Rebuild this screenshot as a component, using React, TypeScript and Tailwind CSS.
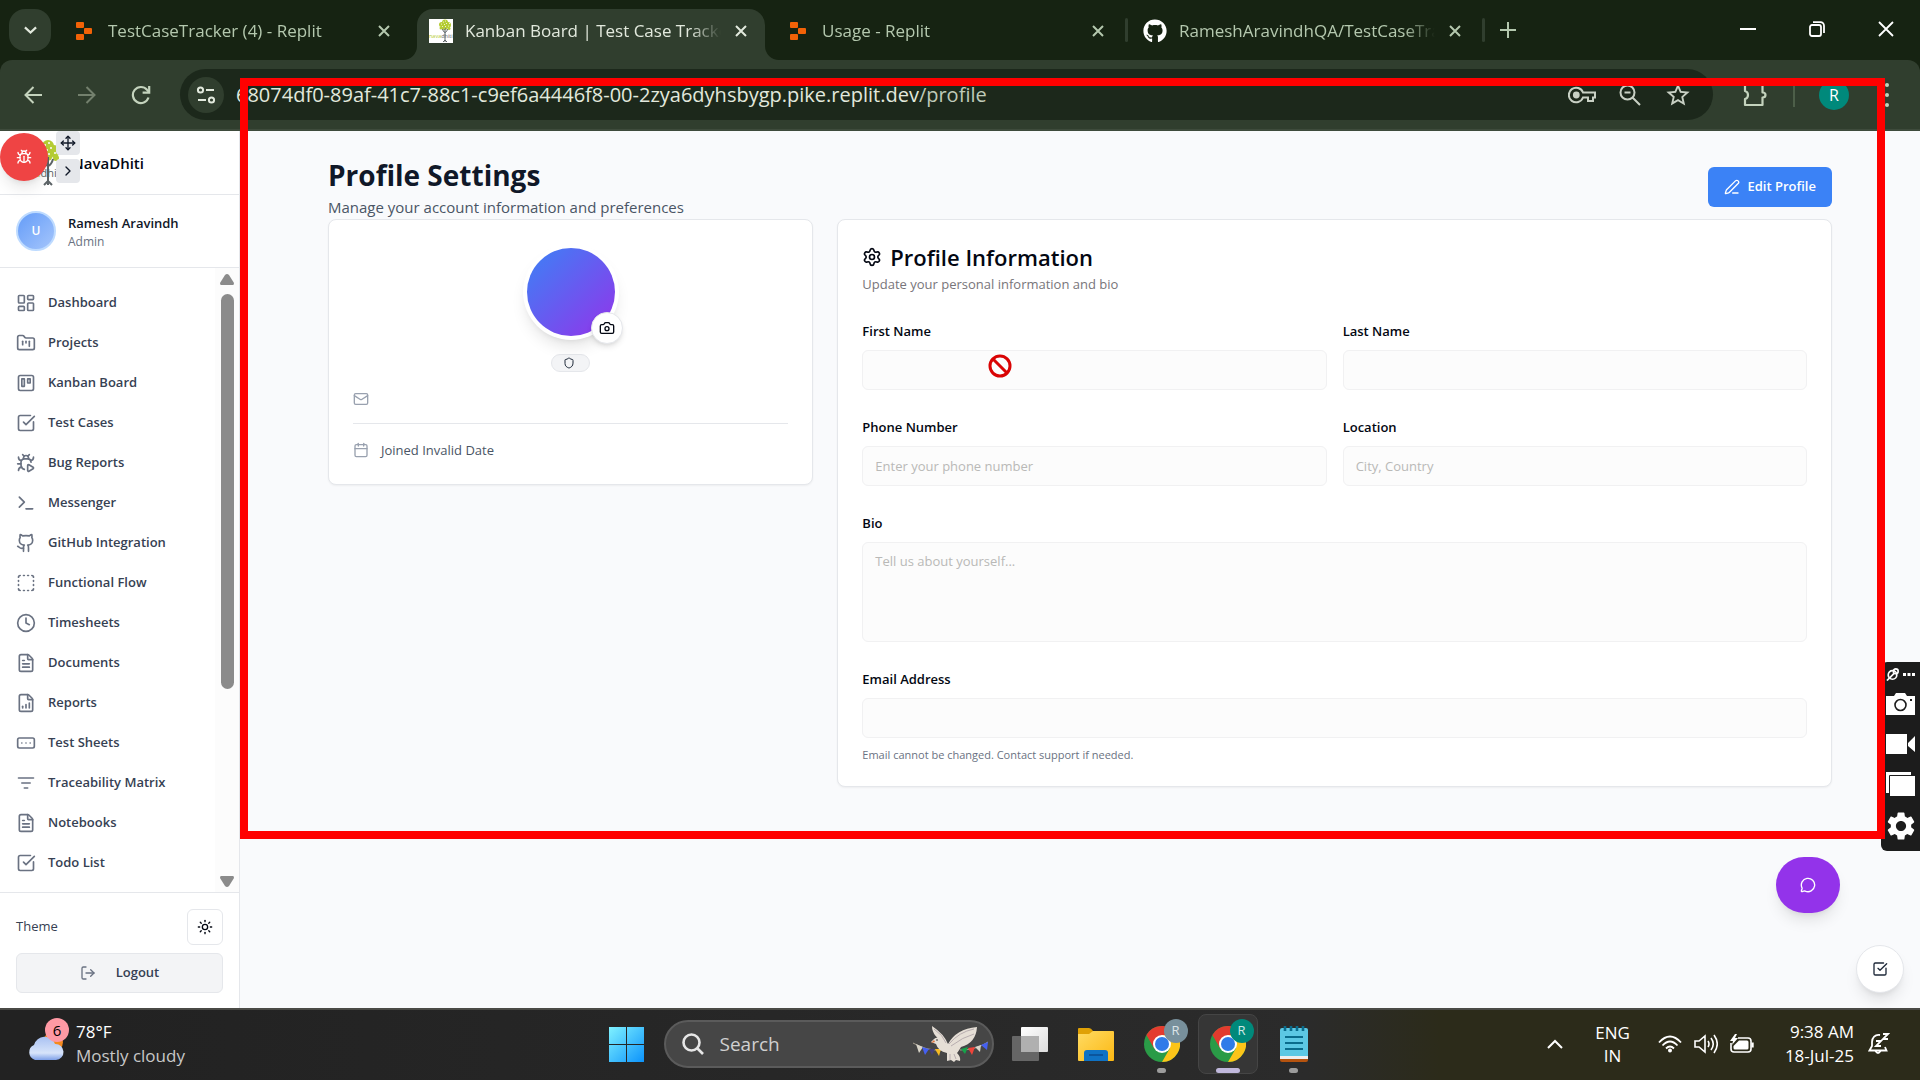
import type { ComponentType, ReactNode } from "react";
import {
  Bug,
  BugPlay,
  Calendar,
  Camera,
  ChevronRight,
  Clock,
  FileChartColumnIncreasing,
  FileText,
  FolderKanban,
  Github,
  LayoutDashboard,
  LogOut,
  Mail,
  MessageCircle,
  Move,
  PenLine,
  RectangleEllipsis,
  Settings,
  Shield,
  SquareCheckBig,
  SquareDashed,
  Sun,
  Terminal,
  Trello,
} from "lucide-react";
import { FaGithub } from "react-icons/fa";
import { MdSettings, MdStarBorder } from "react-icons/md";

type IconType = ComponentType<{ className?: string; strokeWidth?: number }>;

/* ---------- Browser window ---------- */

function ReplitIcon() {
  return (
    <svg viewBox="0 0 24 24" className="size-6" fill="#f26207">
      <rect x="4" y="3" width="8" height="6" rx="1" />
      <rect x="12" y="9" width="8" height="6" rx="1" />
      <rect x="4" y="15" width="8" height="6" rx="1" />
    </svg>
  );
}

function TreeLogo({ className }: { className?: string }) {
  return (
    <svg viewBox="0 0 48 48" className={className}>
      <g fill="#b5cc34">
        <circle cx="32" cy="7" r="6" />
        <circle cx="25" cy="11" r="5" />
        <circle cx="38" cy="12" r="6" />
        <circle cx="31" cy="16" r="6" />
        <circle cx="24" cy="18" r="3" />
        <circle cx="40" cy="19" r="3" />
      </g>
      <g fill="#ffffff">
        <circle cx="29" cy="6" r="1" />
        <circle cx="33" cy="4" r="1" />
        <circle cx="35" cy="9" r="1" />
        <circle cx="31" cy="11" r="1" />
        <circle cx="25" cy="10" r="1" />
        <circle cx="27" cy="15" r="1" />
        <circle cx="33" cy="15" r="1" />
        <circle cx="39" cy="14" r="1" />
        <circle cx="41" cy="9" r="1" />
        <circle cx="31" cy="19" r="1" />
      </g>
      <path
        d="M32 18v28M32 27c-3-1-4-4-5-7M32 27c3-1 4-3 5-7M32 42l-4 4M32 42l4 4"
        stroke="#5d6467"
        strokeWidth="2"
        fill="none"
      />
      <text x="0" y="38" fontSize="11" fontFamily="Open Sans, sans-serif" fill="#b5cc34">
        nava<tspan fill="#5d6467">dhiti</tspan>
      </text>
    </svg>
  );
}

function CloseIcon({ className }: { className?: string }) {
  return (
    <svg viewBox="0 0 12 12" className={className} stroke="currentColor" strokeWidth="2" fill="none">
      <path d="M1 1l10 10M11 1L1 11" />
    </svg>
  );
}

function Tab({ icon, title, active, divider }: { icon: ReactNode; title: string; active?: boolean; divider?: boolean }) {
  return (
    <div
      className={
        active
          ? "relative flex h-[51px] w-[348px] items-center rounded-t-2xl bg-[#303e2e] pr-3 pb-[7px] pl-3 text-[#e2e9dd]"
          : "relative flex h-[51px] w-[348px] items-center pr-3 pb-[7px] pl-3 text-[#b4c8ae]"
      }
    >
      {active && (
        <>
          <svg viewBox="0 0 14 14" className="absolute bottom-0 -left-[14px] size-[14px]" fill="#303e2e">
            <path d="M14 0v14H0A14 14 0 0 0 14 0z" />
          </svg>
          <svg viewBox="0 0 14 14" className="absolute -right-[14px] bottom-0 size-[14px]" fill="#303e2e">
            <path d="M0 0v14h14A14 14 0 0 1 0 0z" />
          </svg>
        </>
      )}
      <span className="flex size-6 shrink-0 items-center justify-center">{icon}</span>
      <span className="ml-3 min-w-0 flex-1 overflow-hidden text-[17px] leading-6 whitespace-nowrap [mask-image:linear-gradient(to_right,black_88%,transparent)]">
        {title}
      </span>
      <button aria-label={"Close " + title} className="ml-2 flex size-6 shrink-0 items-center justify-center">
        <CloseIcon className="size-3" />
      </button>
      {divider && <span className="absolute top-[9px] -right-[6px] h-6 w-[3px] rounded bg-[#303e2e]" />}
    </div>
  );
}

function TabStrip() {
  return (
    <div className="flex h-[60px] shrink-0 items-start bg-[#162312] pt-[9px] text-[#b4c8ae]">
      <button
        aria-label="Search tabs"
        className="mr-[9px] ml-[9px] flex size-[42px] shrink-0 items-center justify-center rounded-2xl bg-[#303e2e]"
      >
        <svg viewBox="0 0 14 9" className="w-[13px]" fill="none" stroke="#e2e9dd" strokeWidth="2.4">
          <path d="M1 1.5l6 5.5 6-5.5" />
        </svg>
      </button>
      <div className="flex min-w-0 gap-[9px]">
        <Tab icon={<ReplitIcon />} title="TestCaseTracker (4) - Replit" />
        <Tab
          active
          icon={
            <span className="size-6 bg-white">
              <TreeLogo className="size-6" />
            </span>
          }
          title="Kanban Board | Test Case Tracker"
        />
        <Tab icon={<ReplitIcon />} title="Usage - Replit" divider />
        <Tab icon={<FaGithub className="size-6 text-white" />} title="RameshAravindhQA/TestCaseTracker" divider />
      </div>
      <button aria-label="New tab" className="ml-2 flex size-[42px] items-center justify-center">
        <svg viewBox="0 0 16 16" className="size-4" stroke="currentColor" strokeWidth="2">
          <path d="M8 0v16M0 8h16" />
        </svg>
      </button>
      <div className="ml-auto flex pt-1 text-white">
        <button aria-label="Minimize" className="flex h-10 w-[69px] items-start justify-center pt-[15px]">
          <span className="h-[2px] w-4 bg-white" />
        </button>
        <button aria-label="Restore" className="flex h-10 w-[69px] items-start justify-center pt-2">
          <svg viewBox="0 0 16 16" className="size-4" fill="none" stroke="currentColor" strokeWidth="1.8">
            <rect x="1" y="4" width="11" height="11" rx="2" />
            <path d="M4 1.2h7.500a3.500 3.500 0 0 1 3.500 3.500V12" />
          </svg>
        </button>
        <button aria-label="Close window" className="flex h-10 w-[69px] items-start justify-center pt-2">
          <svg viewBox="0 0 16 16" className="size-4" stroke="currentColor" strokeWidth="1.8">
            <path d="M1 1l14 14M15 1L1 15" />
          </svg>
        </button>
      </div>
    </div>
  );
}

function Toolbar() {
  return (
    <div className="shrink-0 bg-[#162312]">
      <div className="flex h-[71px] items-center rounded-t-xl border-b-2 border-[#3e4b3c] bg-[#303e2e] text-[#c4d3bd]">
        <div className="flex w-[180px] shrink-0 items-center pl-[21px]">
          <button aria-label="Back" className="flex size-6 items-center justify-center">
            <svg viewBox="0 0 18 18" className="size-[18px]" fill="none" stroke="currentColor" strokeWidth="2">
              <path d="M18 9H2M9.500 1L1.500 9l8 8" />
            </svg>
          </button>
          <button aria-label="Forward" className="ml-[30px] flex size-6 items-center justify-center text-[#73806d]">
            <svg viewBox="0 0 18 18" className="size-[18px]" fill="none" stroke="currentColor" strokeWidth="2">
              <path d="M0 9h16M8.500 1l8 8-8 8" />
            </svg>
          </button>
          <button aria-label="Reload" className="ml-[30px] flex size-6 items-center justify-center">
            <svg viewBox="0 0 20 20" className="size-5" fill="none" stroke="currentColor" strokeWidth="2.2">
              <path d="M17.500 12.500A8 8 0 1 1 16 4.800L18 7" />
              <path d="M18.200 1v6.600h-6.600" />
            </svg>
          </button>
        </div>
        <div className="flex h-[51px] min-w-0 flex-1 items-center rounded-full bg-[#1c281b] pr-5 pl-2">
          <button
            aria-label="View site information"
            className="flex size-9 shrink-0 items-center justify-center rounded-full bg-[#303e2e]"
          >
            <svg viewBox="0 0 20 20" className="size-5" fill="none" stroke="#e2e9dd" strokeWidth="2">
              <circle cx="4.500" cy="5" r="2.600" />
              <path d="M10 5h8M2 15h8" />
              <circle cx="15.500" cy="15" r="2.600" />
            </svg>
          </button>
          <span className="ml-3 min-w-0 flex-1 truncate text-[20px] leading-7 text-[#e2e9dd]">
            68074df0-89af-41c7-88c1-c9ef6a4446f8-00-2zya6dyhsbygp.pike.replit.dev
            <span className="text-[#bfcab8]">/profile</span>
          </span>
          <div className="flex items-center gap-[18px] text-[#c8d0c4]">
            <button aria-label="Passwords" className="flex w-[30px] justify-center">
              <svg viewBox="0 0 28 18" className="w-7" fill="none" stroke="currentColor" strokeWidth="2">
                <path d="M15 6.500a7.300 7.300 0 1 0 0 5h5V15h5v-3.500h2v-5z" />
                <circle cx="8.300" cy="9" r="2.400" fill="currentColor" />
              </svg>
            </button>
            <button aria-label="Zoom" className="flex w-[30px] justify-center">
              <svg viewBox="0 0 22 22" className="size-[22px]" fill="none" stroke="currentColor" strokeWidth="2">
                <circle cx="8.500" cy="8.500" r="7" />
                <path d="M13.500 13.500l7.500 7.500M5.500 8.500h6" />
              </svg>
            </button>
            <button aria-label="Bookmark this tab" className="flex w-[30px] justify-center">
              <MdStarBorder className="size-7" />
            </button>
          </div>
        </div>
        <div className="flex w-[207px] shrink-0 items-center pl-7">
          <button aria-label="Extensions" className="flex w-7 justify-center">
            <svg viewBox="0 0 26 24" className="w-[26px]" fill="none" stroke="currentColor" strokeWidth="2.2" strokeLinejoin="round">
              <path d="M3 2h17.500v7.500c4 0 4 5 0 5V22H3v-6c4-1 4-7 0-8z" />
            </svg>
          </button>
          <span className="ml-6 h-6 w-[2px] bg-[#4d5f49]" />
          <button
            aria-label="Profile R"
            className="ml-6 flex size-[30px] items-center justify-center rounded-full bg-[#00897b] text-[16px] text-white"
          >
            R
          </button>
          <button aria-label="Menu" className="ml-[30px] flex w-4 flex-col items-center gap-[6px]">
            <span className="size-1 rounded-full bg-[#c4d3bd]" />
            <span className="size-1 rounded-full bg-[#c4d3bd]" />
            <span className="size-1 rounded-full bg-[#c4d3bd]" />
          </button>
        </div>
      </div>
    </div>
  );
}

/* ---------- Sidebar ---------- */

function FilterLines({ className }: { className?: string }) {
  return (
    <svg viewBox="0 0 24 24" className={className} stroke="currentColor" strokeWidth="2" strokeLinecap="round">
      <path d="M3 6h18M7 12h10M10 18h4" />
    </svg>
  );
}

const navItems: { label: string; icon: IconType }[] = [
  { label: "Dashboard", icon: LayoutDashboard },
  { label: "Projects", icon: FolderKanban },
  { label: "Kanban Board", icon: Trello },
  { label: "Test Cases", icon: SquareCheckBig },
  { label: "Bug Reports", icon: BugPlay },
  { label: "Messenger", icon: Terminal },
  { label: "GitHub Integration", icon: Github },
  { label: "Functional Flow", icon: SquareDashed },
  { label: "Timesheets", icon: Clock },
  { label: "Documents", icon: FileText },
  { label: "Reports", icon: FileChartColumnIncreasing },
  { label: "Test Sheets", icon: RectangleEllipsis },
  { label: "Traceability Matrix", icon: FilterLines },
  { label: "Notebooks", icon: FileText },
  { label: "Todo List", icon: SquareCheckBig },
];

function Sidebar() {
  return (
    <aside className="flex w-60 shrink-0 flex-col border-r border-gray-200 bg-white">
      <div className="relative flex h-16 shrink-0 items-center border-b border-gray-200 pl-4">
        <TreeLogo className="size-12" />
        <span className="ml-2 text-[15px] leading-6 font-semibold text-gray-950">NavaDhiti</span>
        <button
          aria-label="Report a bug"
          className="absolute top-[2px] left-0 flex size-12 items-center justify-center rounded-full bg-[#ef4444] text-white shadow-lg"
        >
          <Bug className="size-4" />
        </button>
        <button
          aria-label="Move"
          className="absolute top-0 left-14 flex size-6 items-center justify-center rounded bg-gray-200 text-gray-900"
        >
          <Move className="size-4" />
        </button>
        <button
          aria-label="Collapse"
          className="absolute top-7 left-14 flex size-6 items-center justify-center rounded bg-gray-200 text-gray-900"
        >
          <ChevronRight className="size-4" />
        </button>
      </div>
      <div className="flex h-[73px] shrink-0 items-center gap-3 border-b border-gray-200 px-4">
        <span className="flex size-10 items-center justify-center rounded-full border-2 border-blue-200 bg-linear-to-br from-[#649cf8] to-[#a5c5fb] text-xs font-semibold text-white">
          U
        </span>
        <div className="pt-[2px]">
          <p className="text-[13px] leading-5 font-semibold text-gray-900">Ramesh Aravindh</p>
          <p className="text-xs leading-[18px] text-gray-500">Admin</p>
        </div>
      </div>
      <div className="flex min-h-0 flex-1">
        <nav className="min-w-0 flex-1 overflow-hidden pt-[15px]">
          {navItems.map(({ label, icon: Icon }) => (
            <a
              key={label}
              href="#"
              className="flex h-10 items-center gap-3 px-4 text-[13px] font-semibold text-gray-700"
            >
              <Icon className="size-5 shrink-0 text-gray-500" strokeWidth={2} />
              {label}
            </a>
          ))}
        </nav>
        <div className="flex w-6 flex-col items-center bg-[#fcfcfc] pt-[6px] pb-[5px]">
          <svg viewBox="0 0 14 11" className="w-[14px]" fill="#8b8b8b">
            <path d="M7 0q1 0 2 1l5 8q0 2-1 2H1q-1 0-1-2l5-8q1-1 2-1z" />
          </svg>
          <div className="flex min-h-0 w-[13px] flex-1 flex-col py-[9px]">
            <div className="h-[69%] rounded-full bg-[#8b8b8b]" />
          </div>
          <svg viewBox="0 0 14 11" className="w-[14px] rotate-180" fill="#8b8b8b">
            <path d="M7 0q1 0 2 1l5 8q0 2-1 2H1q-1 0-1-2l5-8q1-1 2-1z" />
          </svg>
        </div>
      </div>
      <div className="shrink-0 border-t border-gray-200 px-4 pt-4 pb-[15px]">
        <div className="flex items-center justify-between">
          <span className="text-[13px] text-gray-700">Theme</span>
          <button
            aria-label="Toggle theme"
            className="flex size-9 items-center justify-center rounded-md border border-gray-200 bg-white text-gray-950"
          >
            <Sun className="size-4" />
          </button>
        </div>
        <button className="mt-2 flex h-10 w-full items-center justify-center gap-5 rounded-md border border-gray-200 bg-gray-100 text-[13px] font-semibold text-gray-700">
          <LogOut className="size-4 text-gray-500" />
          Logout
        </button>
      </div>
    </aside>
  );
}

/* ---------- Profile page ---------- */

function Field({ id, label, placeholder, children }: { id: string; label: string; placeholder?: string; children?: ReactNode }) {
  return (
    <div>
      <label htmlFor={id} className="block text-[13px] leading-6 font-semibold text-gray-950">
        {label}
      </label>
      <input
        id={id}
        disabled
        placeholder={placeholder}
        className="mt-[7px] block h-10 w-full rounded-md border border-[#f1f1f2] bg-[#fcfcfc] px-3 text-[13px] placeholder:text-[#b9b9b7]"
      />
      {children}
    </div>
  );
}

function ProfileCard() {
  return (
    <section className="flex flex-col items-center rounded-lg border border-gray-200 bg-white p-6 shadow-xs">
      <div className="relative size-24 rounded-full bg-white p-1 shadow-lg">
        <div className="size-full rounded-full bg-[linear-gradient(to_bottom_right,#3b82f6,#9333ea)]" />
        <button
          aria-label="Change photo"
          className="absolute -right-1 -bottom-1 flex size-8 items-center justify-center rounded-full border border-gray-200 bg-white text-gray-950 shadow-md"
        >
          <Camera className="size-4" />
        </button>
      </div>
      <span className="mt-[14px] flex h-[18px] items-center rounded-full border border-gray-200 bg-gray-100 pr-[14px] pl-[11px] text-gray-800">
        <Shield className="size-3" />
      </span>
      <div className="flex w-full flex-col pt-[19px]">
        <Mail className="size-4 text-gray-400" />
        <hr className="mt-4 border-gray-200" />
        <div className="mt-4 flex items-center gap-3 text-[13px] leading-5 text-gray-600">
          <Calendar className="size-4 text-gray-400" />
          Joined Invalid Date
        </div>
      </div>
    </section>
  );
}

function NotAllowedCursor() {
  return (
    <svg
      viewBox="0 0 24 24"
      className="absolute top-[134px] left-[150px] size-6"
      fill="none"
      stroke="#d90404"
      strokeWidth="3"
    >
      <circle cx="12" cy="12" r="10" />
      <path d="M5 5l14 14" />
    </svg>
  );
}

function InformationCard() {
  return (
    <section className="relative col-span-2 rounded-lg border border-gray-200 bg-white px-6 pt-[21px] pb-[22px] shadow-xs">
      <h2 className="flex items-center gap-2 text-[22px] leading-8 font-semibold text-gray-950">
        <Settings className="size-5" />
        Profile Information
      </h2>
      <p className="mt-[1px] text-[13px] leading-5 text-[#78757a]">Update your personal information and bio</p>
      <form className="mt-[25px] flex flex-col gap-[25px]">
        <div className="grid grid-cols-2 gap-x-4 gap-y-[25px]">
          <Field id="first-name" label="First Name" />
          <Field id="last-name" label="Last Name" />
          <Field id="phone" label="Phone Number" placeholder="Enter your phone number" />
          <Field id="location" label="Location" placeholder="City, Country" />
        </div>
        <div>
          <label htmlFor="bio" className="block text-[13px] leading-6 font-semibold text-gray-950">
            Bio
          </label>
          <textarea
            id="bio"
            disabled
            placeholder="Tell us about yourself..."
            className="mt-[7px] block h-[100px] w-full resize-none rounded-md border border-[#f1f1f2] bg-[#fcfcfc] px-3 py-2 text-[13px] leading-5 placeholder:text-[#b9b9b7]"
          />
        </div>
        <Field id="email" label="Email Address">
          <p className="mt-2 text-[11px] leading-[18px] text-gray-500">
            Email cannot be changed. Contact support if needed.
          </p>
        </Field>
      </form>
      <NotAllowedCursor />
    </section>
  );
}

function ProfilePage() {
  return (
    <main className="min-w-0 flex-1 bg-[#f9fafc]">
      <div className="mx-auto max-w-[1536px] px-4 pt-6">
        <header className="flex items-center justify-between">
          <div>
            <h1 className="text-[28px] leading-10 font-bold text-gray-900">Profile Settings</h1>
            <p className="text-[15px] leading-6 text-gray-600">Manage your account information and preferences</p>
          </div>
          <button className="flex h-10 items-center gap-2 rounded-md bg-[#3b82f6] px-4 text-[13px] font-semibold text-white">
            <PenLine className="size-4" />
            Edit Profile
          </button>
        </header>
        <div className="grid grid-cols-3 items-start gap-6">
          <ProfileCard />
          <InformationCard />
        </div>
      </div>
    </main>
  );
}

function CaptureWidget() {
  return (
    <div className="absolute right-0 bottom-[229px] flex h-[189px] w-[39px] flex-col items-center gap-[19px] rounded-l-md bg-[#1c1c1c] pt-[6px] text-white">
      <div className="flex items-center gap-1">
        <svg viewBox="0 0 14 14" className="size-[13px]" fill="none" stroke="currentColor" strokeWidth="1.8">
          <circle cx="7" cy="7.500" r="4.600" />
          <circle cx="10.500" cy="3.500" r="2.600" />
          <path d="M1 13.500l4-4 4-4" />
        </svg>
        <svg viewBox="0 0 12 3" className="w-3" fill="currentColor">
          <path d="M0 0h3v3H0zM4.500 0h3v3h-3zM9 0h3v3H9z" />
        </svg>
      </div>
      <button aria-label="Take screenshot" className="-mt-[7px]">
        <svg viewBox="0 0 29 22" className="w-[29px]">
          <path d="M0 3h8l2-3h9l2 3h8v19H0z" fill="#fff" />
          <circle cx="14.500" cy="12" r="5.500" fill="none" stroke="#1c1c1c" strokeWidth="1.600" />
          <rect x="24" y="6" width="2" height="2" fill="#1c1c1c" />
        </svg>
      </button>
      <button aria-label="Record video">
        <svg viewBox="0 0 29 20" className="w-[29px]" fill="#fff">
          <path d="M0 0h21v20H0zM22 9l7-7v16l-7-6z" />
        </svg>
      </button>
      <button aria-label="Open gallery" className="-mt-[1px]">
        <svg viewBox="0 0 29 24" className="w-[29px]">
          <path d="M0 0h25v21H0z" fill="#fff" />
          <path d="M3.500 3.500H30V25H3.500z" fill="#fff" stroke="#1c1c1c" />
        </svg>
      </button>
      <button aria-label="Settings" className="-mt-[6px]">
        <MdSettings className="size-[34px]" />
      </button>
    </div>
  );
}

function FloatingActions() {
  return (
    <>
      <button
        aria-label="Open chat"
        className="absolute right-20 bottom-[167px] flex h-14 w-16 items-center justify-center rounded-full bg-[#9333ea] text-white shadow-lg"
      >
        <MessageCircle className="size-4" />
      </button>
      <button
        aria-label="Quick tasks"
        className="absolute right-4 bottom-[87px] flex size-12 items-center justify-center rounded-full border border-gray-200 bg-white text-gray-800 shadow-lg"
      >
        <SquareCheckBig className="size-4" />
      </button>
    </>
  );
}

/* ---------- Taskbar ---------- */

function ChromeLogo() {
  return (
    <svg viewBox="0 0 36 36" className="size-9">
      <circle cx="18" cy="18" r="18" fill="#2a9b47" />
      <path d="M18 9h15.600A18 18 0 0 1 18 36l7.800-13.500z" fill="#fcc419" />
      <path d="M2.400 9L10.200 22.500 18 18V9h15.600A18 18 0 0 0 2.400 9z" fill="#e33b2e" />
      <circle cx="18" cy="18" r="9" fill="#fff" />
      <circle cx="18" cy="18" r="7" fill="#2f7be9" />
    </svg>
  );
}

function TaskbarApp({ label, children, active, running }: { label: string; children: ReactNode; active?: boolean; running?: boolean }) {
  return (
    <button aria-label={label} className="flex w-[66px] justify-center">
      <span
        className={
          active
            ? "relative flex size-[60px] items-center justify-center rounded-lg border border-[#454545] bg-[#363636]"
            : "relative flex size-[60px] items-center justify-center"
        }
      >
        {children}
        {active && <span className="absolute bottom-0 h-[5px] w-6 rounded-full bg-[#c0b8dc]" />}
        {running && <span className="absolute bottom-[1px] h-[5px] w-[9px] rounded-full bg-[#9c9c9c]" />}
      </span>
    </button>
  );
}

function Dove() {
  return (
    <svg viewBox="0 0 78 38" className="h-[38px] w-[78px]">
      <path d="M1 18q14 8 28 7M48 25q16 0 28-8" stroke="#a8a090" fill="none" />
      <path d="M4 19l7 3-4 6z" fill="#d8d4c8" />
      <path d="M10 22l7 2-4 6z" fill="#4560f0" />
      <path d="M17 24h6l-3 6z" fill="#43407a" />
      <path d="M23 24h6l-2 7z" fill="#f7bb22" />
      <path d="M49 24l7-2-3 7z" fill="#16a34a" />
      <path d="M56 23l7-1-3 8z" fill="#f0453a" />
      <path d="M63 22l6-2-1 7z" fill="#d8d4c8" />
      <path d="M69 20l7-3-1 8z" fill="#4560f0" />
      <path d="M22 14q3-3 7 0l5 4Q20 12 20 1q12 8 16 18Q44 4 65 2q-1 16-16 20-3 5-4 6 4 4 3 8l-4-1-2 2-3-2-4 1v-8q-9-2-11-9l-5-2z" fill="#e6dfd6" />
      <path d="M37 19Q47 7 62 4M39 21Q51 12 62 9M22 4q9 6 12 14M38 29v6M42 29l2 5" stroke="#b8aeb0" fill="none" />
      <path d="M22 15l-3 3 4-1z" fill="#e2743a" />
      <circle cx="25" cy="15" r="0.8" fill="#222" />
    </svg>
  );
}

function Taskbar() {
  return (
    <footer className="grid h-[72px] shrink-0 grid-cols-[1fr_auto_1fr] items-center border-t-2 border-[#4a4a46] bg-linear-to-r from-[#222222] from-5% via-[#2b2b2b] via-68% to-[#2c2b1a] to-75% pb-[2px] text-white">
      <div className="flex items-center pl-[26px]">
        <div className="relative">
          <svg viewBox="0 0 38 36" className="h-9 w-[38px]">
            <defs>
              <linearGradient id="cloud" x1="0" y1="0" x2="0" y2="1">
                <stop offset="0" stopColor="#a9c1f2" />
                <stop offset="0.7" stopColor="#d7e4fa" />
                <stop offset="1" stopColor="#7ea0e8" />
              </linearGradient>
            </defs>
            <circle cx="27" cy="16" r="10" fill="#f58a1f" />
            <path d="M9 34a8 8 0 0 1-1-15 11 11 0 0 1 21-1 8 8 0 0 1 1 16z" fill="url(#cloud)" />
          </svg>
          <span className="absolute -top-[8px] left-[19px] flex size-6 items-center justify-center rounded-full bg-[#ff99a4] text-[15px] text-black">
            6
          </span>
        </div>
        <div className="ml-3 text-[17px] leading-6">
          <p>78°F</p>
          <p className="text-[#c8c8c8]">Mostly cloudy</p>
        </div>
      </div>

      <div className="flex items-center">
        <TaskbarApp label="Start">
          <svg viewBox="0 0 35 35" className="size-[35px]">
            <defs>
              <linearGradient id="start" x1="0" y1="0" x2="1" y2="1">
                <stop offset="0" stopColor="#80f2ff" />
                <stop offset="1" stopColor="#0c93fb" />
              </linearGradient>
            </defs>
            <path d="M0 0h17v17H0zM18 0h17v17H18zM0 18h17v17H0zM18 18h17v17H18z" fill="url(#start)" />
          </svg>
        </TaskbarApp>
        <label className="mr-[3px] ml-1 flex h-12 w-[330px] items-center rounded-full border-2 border-[#5b5b5b] bg-[#464646] pr-[2px] pl-4">
          <svg viewBox="0 0 22 22" className="size-[22px] shrink-0" fill="none" stroke="#e6e6e6" strokeWidth="2.600">
            <circle cx="9.500" cy="9.500" r="8" />
            <path d="M15 15l6 6" />
          </svg>
          <input
            aria-label="Search"
            placeholder="Search"
            className="ml-4 min-w-0 flex-1 bg-transparent text-[19px] outline-none placeholder:text-[#d0d0d0]"
          />
          <Dove />
        </label>
        <TaskbarApp label="Task View">
          <svg viewBox="0 0 36 34" className="w-9">
            <defs>
              <linearGradient id="view" x1="0" y1="0" x2="1" y2="1">
                <stop offset="0" stopColor="#ffffff" />
                <stop offset="1" stopColor="#dddddd" />
              </linearGradient>
            </defs>
            <rect x="9" width="27" height="25" rx="1" fill="url(#view)" />
            <rect y="9" width="27" height="25" rx="1" fill="#666666" />
            <path d="M9 9h18v16H9z" fill="#b0b0b0" />
          </svg>
        </TaskbarApp>
        <TaskbarApp label="File Explorer">
          <svg viewBox="0 0 36 33" className="w-9">
            <defs>
              <linearGradient id="folder" x1="0" y1="0" x2="1" y2="1">
                <stop offset="0" stopColor="#ffdb63" />
                <stop offset="1" stopColor="#fcb813" />
              </linearGradient>
            </defs>
            <path d="M0 1q0-1 1-1h10q2 0 4 3v6H0z" fill="#e0a106" />
            <path d="M0 6h11l4-3h20q1 0 1 1v28q0 1-1 1H1q-1 0-1-1z" fill="url(#folder)" />
            <path d="M6 33v-8q0-3 3-3h18q3 0 3 3v8z" fill="#0f72c4" />
            <path d="M11 27h14" stroke="#0b4f94" strokeWidth="1.600" />
          </svg>
        </TaskbarApp>
        <TaskbarApp label="Google Chrome" running>
          <ChromeLogo />
          <span className="absolute top-[5px] right-[4px] flex size-6 items-center justify-center rounded-full bg-[#78909c] text-[13px] font-medium text-[#dce4e8]">
            R
          </span>
        </TaskbarApp>
        <TaskbarApp label="Google Chrome, profile R" active>
          <ChromeLogo />
          <span className="absolute top-[4px] right-[3px] flex size-6 items-center justify-center rounded-full bg-[#00897b] text-[13px] font-medium text-[#cfe8e5]">
            R
          </span>
        </TaskbarApp>
        <TaskbarApp label="Notepad" running>
          <svg viewBox="0 0 28 36" className="h-9 w-7">
            <path d="M0 31h28v3q0 2-2 2H2q-2 0-2-2z" fill="#b5530f" />
            <path d="M0 28h28v5H0z" fill="#eeeeee" />
            <path d="M0 4q0-2 2-2h24q2 0 2 2v26H0z" fill="#5cc8e4" />
            <path d="M5 11h18M5 17h18M5 23h18" stroke="#0a6c8c" strokeWidth="2" />
            <path d="M5 0v5M11 0v5M17 0v5M23 0v5" stroke="#0a6c8c" strokeWidth="2.600" />
          </svg>
        </TaskbarApp>
      </div>

      <div className="flex items-center justify-end pr-[30px]">
        <button aria-label="Show hidden icons">
          <svg viewBox="0 0 16 10" className="w-4" fill="none" stroke="currentColor" strokeWidth="2">
            <path d="M1 9l7-7 7 7" />
          </svg>
        </button>
        <div className="ml-8 text-center text-[17px] leading-[23px]">
          <p>ENG</p>
          <p>IN</p>
        </div>
        <div className="ml-7 flex items-center gap-3">
          <svg viewBox="0 0 24 18" className="w-6" fill="none" stroke="currentColor" strokeWidth="1.800">
            <path d="M1 7.500Q12-4.500 23 7.500M4.500 10.500Q12 2.500 19.500 10.500M8 13.500q4-4 8 0" />
            <circle cx="12" cy="15.500" r="2" fill="currentColor" stroke="none" />
          </svg>
          <svg viewBox="0 0 24 20" className="w-6" fill="none" stroke="currentColor" strokeWidth="1.600">
            <path d="M1 7h4l6-5v16l-6-5H1zM14 7q2 3 0 6M17 4q4.500 6 0 12M20 1q6.500 9 0 18" />
          </svg>
          <svg viewBox="0 0 24 20" className="w-6" fill="none" stroke="currentColor" strokeWidth="1.600">
            <path d="M8 4h10q3 0 3 3v8q0 3-3 3H4q-3 0-3-3V9" />
            <path d="M9 6.500h8q1.500 0 1.500 1.500v6q0 1.500-1.500 1.500H5q-1.500 0-1.500-1.500v-2z" fill="currentColor" stroke="none" />
            <path d="M22.500 8.500v5" strokeWidth="2.400" />
            <path d="M5 0L0 7h3l-1 4 6-7H5l2-4z" fill="currentColor" stroke="none" />
          </svg>
        </div>
        <div className="ml-[31px] text-right text-[17px] leading-6">
          <p>9:38 AM</p>
          <p>18-Jul-25</p>
        </div>
        <svg viewBox="0 0 22 22" className="ml-[14px] w-[22px]" fill="none" stroke="currentColor" strokeWidth="1.800">
          <path d="M12 2C7 1 4 5 4 9v4l-2.500 4.500h17L17 14M7.500 18q2.500 4 5 0" />
          <path d="M8 8h5l-5 5h5M15 1h5l-5 5h5" />
        </svg>
      </div>
    </footer>
  );
}

export default function App() {
  return (
    <div className="relative flex h-screen flex-col overflow-hidden font-['Open_Sans',sans-serif]">
      <TabStrip />
      <Toolbar />
      <div className="flex min-h-0 flex-1">
        <Sidebar />
        <ProfilePage />
      </div>
      <Taskbar />
      <CaptureWidget />
      <FloatingActions />
      <div className="pointer-events-none absolute top-[78px] right-[35px] bottom-[241px] left-60 border-8 border-[#ff0000]" />
    </div>
  );
}
